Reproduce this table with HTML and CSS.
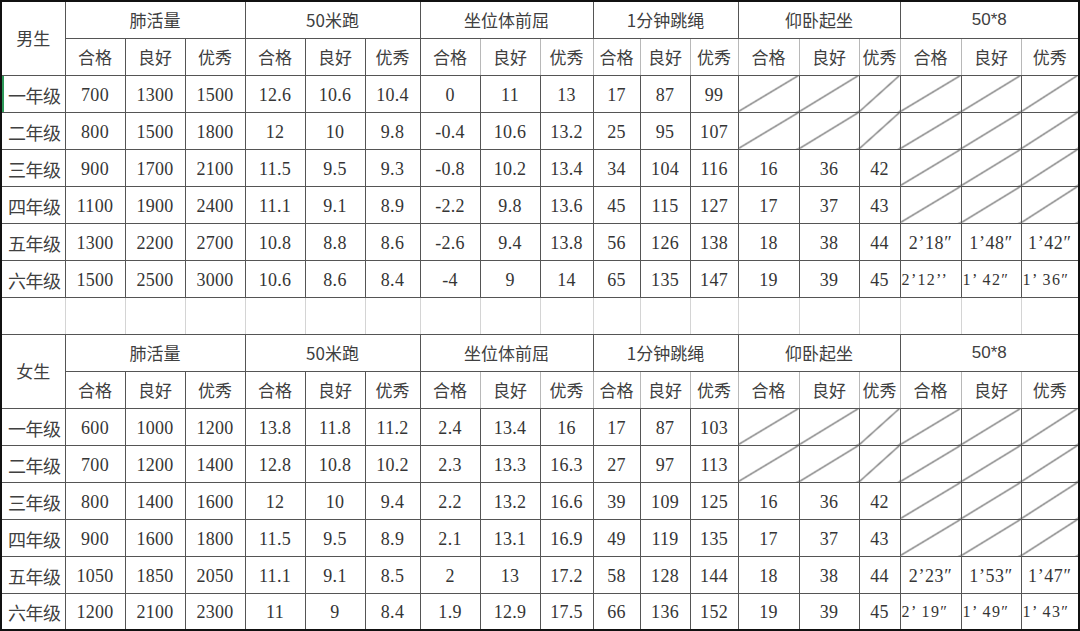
FILE: index.html
```html
<!DOCTYPE html>
<html lang="zh-CN">
<head>
<meta charset="utf-8">
<title>体质测试标准</title>
<link rel="stylesheet" href="styles.css">
</head>
<body>
<div class="frame">
<table class="sheet">
<colgroup>
<col class="c63"><col class="c60"><col class="c60"><col class="c60"><col class="c60"><col class="c60"><col class="c55"><col class="c60"><col class="c60"><col class="c53"><col class="c47"><col class="c50"><col class="c48"><col class="c61"><col class="c60"><col class="c41"><col class="c61"><col class="c60"><col class="c57">
</colgroup>
<tbody>
<tr class="r36">
<td rowspan="2" class="cn">男生</td>
<td colspan="3" class="cn">肺活量</td>
<td colspan="3" class="cn">50米跑</td>
<td colspan="3" class="cn">坐位体前屈</td>
<td colspan="3" class="cn">1分钟跳绳</td>
<td colspan="3" class="cn">仰卧起坐</td>
<td colspan="3" class="cn sans">50*8</td>
</tr>
<tr class="sub">
<td class="cn">合格</td><td class="cn">良好</td><td class="cn">优秀</td>
<td class="cn">合格</td><td class="cn">良好</td><td class="cn">优秀</td>
<td class="cn lt">合格</td><td class="cn lt">良好</td><td class="cn lt">优秀</td>
<td class="cn lt">合格</td><td class="cn lt">良好</td><td class="cn lt">优秀</td>
<td class="cn lt">合格</td><td class="cn lt">良好</td><td class="cn lt">优秀</td>
<td class="cn lt">合格</td><td class="cn lt">良好</td><td class="cn lt">优秀</td>
</tr>
<tr>
<td class="cn grade sel">一年级</td><td>700</td><td>1300</td><td>1500</td><td>12.6</td><td>10.6</td><td>10.4</td><td>0</td><td>11</td><td>13</td><td>17</td><td>87</td><td>99</td>
<td class="x"></td><td class="x"></td><td class="x"></td><td class="x"></td><td class="x"></td><td class="x"></td>
</tr>
<tr>
<td class="cn grade">二年级</td><td>800</td><td>1500</td><td>1800</td><td>12</td><td>10</td><td>9.8</td><td>-0.4</td><td>10.6</td><td>13.2</td><td>25</td><td>95</td><td>107</td>
<td class="x"></td><td class="x"></td><td class="x"></td><td class="x"></td><td class="x"></td><td class="x"></td>
</tr>
<tr>
<td class="cn grade">三年级</td><td>900</td><td>1700</td><td>2100</td><td>11.5</td><td>9.5</td><td>9.3</td><td>-0.8</td><td>10.2</td><td>13.4</td><td>34</td><td>104</td><td>116</td>
<td>16</td><td>36</td><td>42</td><td class="x"></td><td class="x"></td><td class="x"></td>
</tr>
<tr>
<td class="cn grade">四年级</td><td>1100</td><td>1900</td><td>2400</td><td>11.1</td><td>9.1</td><td>8.9</td><td>-2.2</td><td>9.8</td><td>13.6</td><td>45</td><td>115</td><td>127</td>
<td>17</td><td>37</td><td>43</td><td class="x"></td><td class="x"></td><td class="x"></td>
</tr>
<tr>
<td class="cn grade">五年级</td><td>1300</td><td>2200</td><td>2700</td><td>10.8</td><td>8.8</td><td>8.6</td><td>-2.6</td><td>9.4</td><td>13.8</td><td>56</td><td>126</td><td>138</td>
<td>18</td><td>38</td><td>44</td><td class="t">2’18″</td><td class="t">1’48″</td><td class="t">1’42″</td>
</tr>
<tr>
<td class="cn grade">六年级</td><td>1500</td><td>2500</td><td>3000</td><td>10.6</td><td>8.6</td><td>8.4</td><td>-4</td><td>9</td><td>14</td><td>65</td><td>135</td><td>147</td>
<td>19</td><td>39</td><td>45</td><td class="t sm">2’12’’</td><td class="t sm">1’ 42″</td><td class="t sm">1’ 36″</td>
</tr>
<tr class="gap">
<td></td><td></td><td></td><td></td><td></td><td></td><td></td><td></td><td></td><td></td><td></td><td></td><td></td><td></td><td></td><td></td><td></td><td></td><td></td>
</tr>
<tr>
<td rowspan="2" class="cn">女生</td>
<td colspan="3" class="cn">肺活量</td>
<td colspan="3" class="cn">50米跑</td>
<td colspan="3" class="cn">坐位体前屈</td>
<td colspan="3" class="cn">1分钟跳绳</td>
<td colspan="3" class="cn">仰卧起坐</td>
<td colspan="3" class="cn sans">50*8</td>
</tr>
<tr class="sub">
<td class="cn">合格</td><td class="cn">良好</td><td class="cn">优秀</td>
<td class="cn">合格</td><td class="cn">良好</td><td class="cn">优秀</td>
<td class="cn lt">合格</td><td class="cn lt">良好</td><td class="cn lt">优秀</td>
<td class="cn lt">合格</td><td class="cn lt">良好</td><td class="cn lt">优秀</td>
<td class="cn lt">合格</td><td class="cn lt">良好</td><td class="cn lt">优秀</td>
<td class="cn lt">合格</td><td class="cn lt">良好</td><td class="cn lt">优秀</td>
</tr>
<tr>
<td class="cn grade">一年级</td><td>600</td><td>1000</td><td>1200</td><td>13.8</td><td>11.8</td><td>11.2</td><td>2.4</td><td>13.4</td><td>16</td><td>17</td><td>87</td><td>103</td>
<td class="x"></td><td class="x"></td><td class="x"></td><td class="x"></td><td class="x"></td><td class="x"></td>
</tr>
<tr>
<td class="cn grade">二年级</td><td>700</td><td>1200</td><td>1400</td><td>12.8</td><td>10.8</td><td>10.2</td><td>2.3</td><td>13.3</td><td>16.3</td><td>27</td><td>97</td><td>113</td>
<td class="x"></td><td class="x"></td><td class="x"></td><td class="x"></td><td class="x"></td><td class="x"></td>
</tr>
<tr>
<td class="cn grade">三年级</td><td>800</td><td>1400</td><td>1600</td><td>12</td><td>10</td><td>9.4</td><td>2.2</td><td>13.2</td><td>16.6</td><td>39</td><td>109</td><td>125</td>
<td>16</td><td>36</td><td>42</td><td class="x"></td><td class="x"></td><td class="x"></td>
</tr>
<tr>
<td class="cn grade">四年级</td><td>900</td><td>1600</td><td>1800</td><td>11.5</td><td>9.5</td><td>8.9</td><td>2.1</td><td>13.1</td><td>16.9</td><td>49</td><td>119</td><td>135</td>
<td>17</td><td>37</td><td>43</td><td class="x"></td><td class="x"></td><td class="x"></td>
</tr>
<tr>
<td class="cn grade">五年级</td><td>1050</td><td>1850</td><td>2050</td><td>11.1</td><td>9.1</td><td>8.5</td><td>2</td><td>13</td><td>17.2</td><td>58</td><td>128</td><td>144</td>
<td>18</td><td>38</td><td>44</td><td class="t">2’23″</td><td class="t">1’53″</td><td class="t">1’47″</td>
</tr>
<tr class="r36">
<td class="cn grade">六年级</td><td>1200</td><td>2100</td><td>2300</td><td>11</td><td>9</td><td>8.4</td><td>1.9</td><td>12.9</td><td>17.5</td><td>66</td><td>136</td><td>152</td>
<td>19</td><td>39</td><td>45</td><td class="t sm">2’ 19″</td><td class="t sm">1’ 49″</td><td class="t sm">1’ 43″</td>
</tr>
</tbody>
</table>
</div>
</body>
</html>
```
FILE: styles.css
```css
html, body {
  margin: 0;
  padding: 0;
  background: #ffffff;
}

.frame {
  width: 1080px;
  height: 631px;
  box-sizing: border-box;
  border: 2px solid #111111;
  overflow: hidden;
  background: #ffffff;
}

.sheet {
  width: 1076px;
  table-layout: fixed;
  border-collapse: collapse;
  border-style: hidden;
  color: #353535;
  font-family: "Liberation Serif", "DejaVu Serif", serif;
  font-size: 18px;
}

.c63 { width: 63px; }
.c60 { width: 60px; }
.c55 { width: 55px; }
.c53 { width: 53px; }
.c47 { width: 47px; }
.c50 { width: 50px; }
.c48 { width: 48px; }
.c61 { width: 61px; }
.c41 { width: 41px; }
.c57 { width: 57px; }

.sheet tr {
  height: 37px;
}

.sheet tr.r36 {
  height: 36px;
}

.sheet td {
  border: 1px solid #555555;
  padding: 0;
  padding-top: 2px;
  text-align: center;
  vertical-align: middle;
  white-space: nowrap;
  overflow: hidden;
  line-height: 20px;
  letter-spacing: 0.3px;
}

.sheet td.cn {
  font-family: "Noto Sans CJK SC", "Noto Sans", sans-serif;
  font-size: 17px;
  color: #404040;
  letter-spacing: 0;
  padding-top: 0;
}

.sheet td.sans {
  font-family: "Liberation Sans", "Noto Sans CJK SC", sans-serif;
}

.sheet td.grade {
  font-size: 18px;
  letter-spacing: -0.5px;
  padding-left: 2px;
  padding-top: 2px;
}

.sheet td.sel {
  box-shadow: inset 2px 0 0 #2e9a5a;
}

.sheet tr.sub td.lt {
  border-left-color: #b8b8b8;
  border-right-color: #b8b8b8;
}

.sheet td.x {
  background: linear-gradient(to bottom right,
    transparent calc(50% - 1px),
    #4a4a4a 50%,
    transparent calc(50% + 1px));
}

.sheet td.t {
  letter-spacing: 0.6px;
}

.sheet td.t.sm {
  font-size: 16px;
  letter-spacing: 1.3px;
  text-align: left;
  padding-left: 1px;
}

.sheet tr.gap td {
  border-left-color: #d4d4d4;
  border-right-color: #d4d4d4;
}
```
